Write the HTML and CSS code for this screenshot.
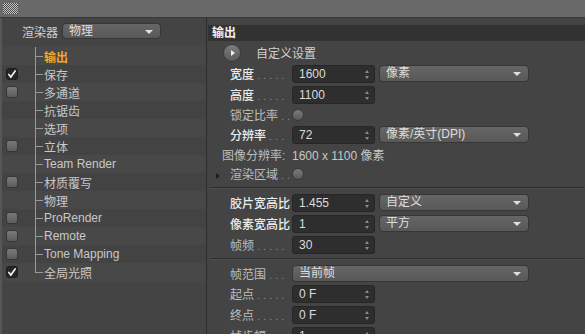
FILE: index.html
```html
<!DOCTYPE html>
<html lang="zh-CN">
<head>
    <meta charset="UTF-8">
    <title>渲染设置</title>
    <link rel="stylesheet" href="styles.css">
</head>
<body>

    <div class="titlebar"><span class="grip"></span></div>

    <div class="main">
        <!-- Left: renderer + settings tree -->
        <aside class="sidebar">
            <div class="renderer">
                <span>渲染器</span>
                <div class="select small">物理</div>
            </div>
            <ul class="tree">
                <li class="active"><span class="cell"></span><span class="branch"></span>输出</li>
                <li><span class="cell"><span class="box on"><svg viewBox="0 0 12 12"><path d="M2.2 6.6 L4.6 9.6 L9.8 2.4"/></svg></span></span><span class="branch"></span>保存</li>
                <li><span class="cell"><span class="box"></span></span><span class="branch"></span>多通道</li>
                <li><span class="cell"></span><span class="branch"></span>抗锯齿</li>
                <li><span class="cell"></span><span class="branch"></span>选项</li>
                <li><span class="cell"><span class="box"></span></span><span class="branch"></span>立体</li>
                <li><span class="cell"></span><span class="branch"></span>Team Render</li>
                <li><span class="cell"><span class="box"></span></span><span class="branch"></span>材质覆写</li>
                <li><span class="cell"></span><span class="branch"></span>物理</li>
                <li><span class="cell"><span class="box"></span></span><span class="branch"></span>ProRender</li>
                <li><span class="cell"><span class="box"></span></span><span class="branch"></span>Remote</li>
                <li><span class="cell"><span class="box"></span></span><span class="branch"></span>Tone Mapping</li>
                <li class="last"><span class="cell"><span class="box on"><svg viewBox="0 0 12 12"><path d="M2.2 6.6 L4.6 9.6 L9.8 2.4"/></svg></span></span><span class="branch"></span>全局光照</li>
            </ul>
        </aside>

        <!-- Right: output settings -->
        <section class="settings">
            <h2 class="group-title">输出</h2>

            <div class="rows">
                <div class="row custom">
                    <span class="play"></span>
                    <span>自定义设置</span>
                </div>

                <div class="row">
                    <span class="label strong">宽度<span class="dots">.....</span></span>
                    <span class="field">1600<span class="spin"></span></span>
                    <span class="select">像素</span>
                </div>
                <div class="row">
                    <span class="label strong">高度<span class="dots">.....</span></span>
                    <span class="field">1100<span class="spin"></span></span>
                </div>
                <div class="row short">
                    <span class="label">锁定比率<span class="dots">..</span></span>
                    <span class="radio"></span>
                </div>
                <div class="row">
                    <span class="label strong">分辨率<span class="dots">...</span></span>
                    <span class="field">72<span class="spin"></span></span>
                    <span class="select">像素/英寸(DPI)</span>
                </div>
                <div class="row short">
                    <span class="label outdent">图像分辨率:</span>
                    <span class="value">1600 x 1100 像素</span>
                </div>
                <div class="row short">
                    <span class="label"><span class="twisty"></span>渲染区域<span class="dots">..</span></span>
                    <span class="radio"></span>
                </div>

                <hr class="sep">

                <div class="row">
                    <span class="label strong">胶片宽高比</span>
                    <span class="field">1.455<span class="spin"></span></span>
                    <span class="select">自定义</span>
                </div>
                <div class="row">
                    <span class="label strong">像素宽高比</span>
                    <span class="field">1<span class="spin"></span></span>
                    <span class="select">平方</span>
                </div>
                <div class="row">
                    <span class="label">帧频<span class="dots">.....</span></span>
                    <span class="field">30<span class="spin"></span></span>
                </div>

                <hr class="sep sep-tight">

                <div class="row short">
                    <span class="label">帧范围<span class="dots">...</span></span>
                    <span class="select wide">当前帧</span>
                </div>
                <div class="row">
                    <span class="label">起点<span class="dots">.....</span></span>
                    <span class="field">0 F<span class="spin"></span></span>
                </div>
                <div class="row">
                    <span class="label">终点<span class="dots">.....</span></span>
                    <span class="field">0 F<span class="spin"></span></span>
                </div>
                <div class="row">
                    <span class="label">帧步幅<span class="dots">...</span></span>
                    <span class="field">1<span class="spin"></span></span>
                </div>
            </div>
        </section>
    </div>

</body>
</html>
```

FILE: styles.css
```css
/* General */
* {
    margin: 0;
    padding: 0;
    box-sizing: border-box;
}

body {
    width: 585px;
    height: 334px;
    overflow: hidden;
    background-color: #444;
    color: #c4c4c4;
    font-family: "Liberation Sans", "Noto Sans CJK SC", sans-serif;
    font-size: 12px;
}

/* Title bar with grip */
.titlebar {
    height: 18px;
    background-color: #696969;
    border-bottom: 1px solid #383838;
    padding: 3px 0 0 3px;
}

.grip {
    display: block;
    width: 15px;
    height: 11px;
    background: repeating-conic-gradient(#c4c4c4 0 25%, #4a4a4a 0 50%) 0 0 / 2px 2px;
}

.main {
    display: flex;
    height: 316px;
}

/* Sidebar */
.sidebar {
    width: 207px;
    flex: none;
    background-color: #444;
    border-left: 2px solid #565656;
    border-right: 1px solid #2d2d2d;
    padding-top: 5px;
}

.renderer {
    display: flex;
    align-items: center;
    gap: 4px;
    height: 16px;
    padding-left: 20px;
    margin-bottom: 8px;
    color: #d2d2d2;
}

.tree {
    list-style: none;
}

.tree li {
    display: flex;
    align-items: center;
    height: 18px;
    background-color: #484848;
    color: #c8c8c8;
}

.tree li:nth-child(even) {
    background-color: #434343;
}

.tree li.active {
    color: #f6a524;
    font-weight: bold;
}

.cell {
    width: 33px;
    flex: none;
    padding-left: 4px;
    display: flex;
    align-items: center;
}

/* Checkboxes in the tree */
.box {
    width: 12px;
    height: 12px;
    border-radius: 3px;
    border: 1px solid #363636;
    background: linear-gradient(#7a7a7a, #5c5c5c);
}

.box.on {
    background: #262626;
    border-color: #1c1c1c;
}

.box svg {
    display: block;
    width: 10px;
    height: 10px;
}

.box svg path {
    fill: none;
    stroke: #f0f0f0;
    stroke-width: 2;
    stroke-linecap: round;
}

/* Tree connector lines */
.branch {
    width: 8px;
    height: 18px;
    flex: none;
    margin-right: 1px;
    border-left: 1px solid #9a9a9a;
    background: linear-gradient(#9a9a9a, #9a9a9a) no-repeat 0 50% / 100% 1px;
}

.tree li.last .branch {
    border-left: none;
    background:
        linear-gradient(#9a9a9a, #9a9a9a) no-repeat 0 50% / 100% 1px,
        linear-gradient(#9a9a9a, #9a9a9a) no-repeat 0 0 / 1px 50%;
}

/* Settings panel */
.settings {
    flex: 1;
    padding-top: 7px;
    background-color: #444;
}

.group-title {
    height: 16px;
    line-height: 16px;
    margin-left: 1px;
    padding-left: 4px;
    background-color: #323232;
    color: #f0f0f0;
    font-size: 12px;
    font-weight: bold;
}

.rows {
    padding-top: 1px;
}

.row {
    display: flex;
    align-items: center;
    height: 21px;
    padding-left: 23px;
}

.row.short {
    height: 19px;
}

.row.custom {
    padding-left: 16px;
    gap: 15px;
    color: #d0d0d0;
}

.play {
    position: relative;
    width: 18px;
    height: 18px;
    border-radius: 50%;
    border: 1px solid #3a3a3a;
    background: linear-gradient(#7c7c7c, #5a5a5a);
}

.play::after {
    content: "";
    position: absolute;
    left: 7px;
    top: 5px;
    border-left: 4px solid #eee;
    border-top: 3px solid transparent;
    border-bottom: 3px solid transparent;
}

.label {
    width: 62px;
    flex: none;
    white-space: nowrap;
    color: #bdbdbd;
}

.label.strong {
    color: #ececec;
    font-weight: 500;
}

.label.outdent {
    width: 70px;
    margin-left: -8px;
}

.dots {
    margin-left: 3px;
    font-size: 11px;
    font-weight: normal;
    letter-spacing: 3px;
    color: #8a8a8a;
}

.twisty {
    display: inline-block;
    margin-left: -14px;
    margin-right: 10px;
    vertical-align: middle;
    border-left: 4px solid #1e1e1e;
    border-top: 3px solid transparent;
    border-bottom: 3px solid transparent;
}

.value {
    color: #c8c8c8;
}

/* Number fields */
.field {
    position: relative;
    width: 83px;
    height: 18px;
    line-height: 17px;
    padding-left: 6px;
    border-radius: 3px;
    border: 1px solid #262626;
    background-color: #2e2e2e;
    color: #dcdcdc;
}

.spin {
    position: absolute;
    right: 4px;
    top: 4px;
    width: 5px;
    height: 9px;
}

.spin::before,
.spin::after {
    content: "";
    position: absolute;
    left: 0;
    border-left: 2.5px solid transparent;
    border-right: 2.5px solid transparent;
}

.spin::before {
    top: 0;
    border-bottom: 3px solid #8c8c8c;
}

.spin::after {
    bottom: 0;
    border-top: 3px solid #8c8c8c;
}

/* Dropdowns */
.select {
    position: relative;
    width: 150px;
    height: 17px;
    line-height: 15px;
    margin-left: 4px;
    padding-left: 6px;
    border-radius: 4px;
    border: 1px solid #363636;
    background: linear-gradient(#666, #585858);
    color: #dedede;
}

.select::after {
    content: "";
    position: absolute;
    right: 7px;
    top: 6px;
    border-left: 4px solid transparent;
    border-right: 4px solid transparent;
    border-top: 4px solid #e0e0e0;
}

.select.small {
    width: 99px;
    height: 16px;
    margin-left: 0;
}

.select.wide {
    width: 237px;
    margin-left: 0;
}

/* Round toggle */
.radio {
    width: 12px;
    height: 12px;
    border-radius: 50%;
    border: 1px solid #383838;
    background: linear-gradient(#7a7a7a, #5a5a5a);
}

/* Separators */
.sep {
    border: none;
    border-top: 1px solid #2e2e2e;
    border-bottom: 1px solid #4e4e4e;
    margin: 4px 0 3px 3px;
}

.sep.sep-tight {
    margin: 3px 0 4px 3px;
}
```
